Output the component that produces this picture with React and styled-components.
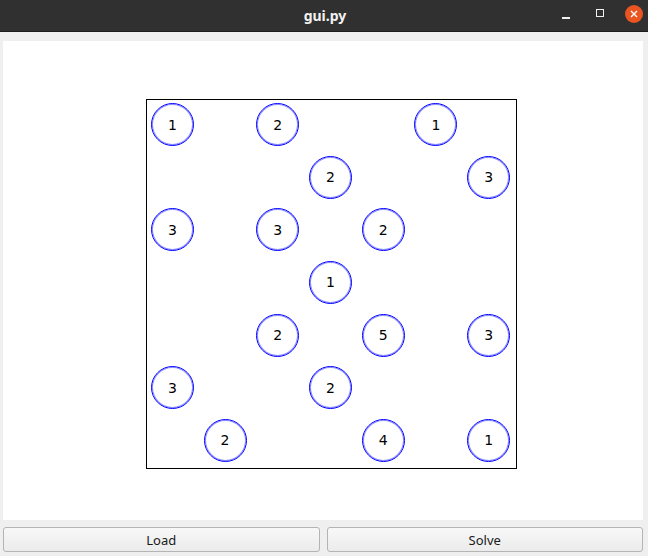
import React from 'react';
import styled, { createGlobalStyle } from 'styled-components';

const GlobalStyle = createGlobalStyle`
    html, body {
        margin: 0;
        padding: 0;
        background: #efefef;
    }
`;

const Window = styled.div`
    width: 648px;
    height: 556px;
    display: flex;
    flex-direction: column;
    background: #efefef;
    overflow: hidden;
`;

const TitleBar = styled.div`
    height: 31px;
    flex-shrink: 0;
    background: #303030;
    border-bottom: 1px solid #1c1c1c;
    display: flex;
    align-items: center;
    justify-content: center;
    position: relative;
`;

const Title = styled.div`
    font-family: "Noto Sans", "DejaVu Sans", sans-serif;
    font-weight: 700;
    font-size: 14px;
    color: #f2f2f2;
    margin-left: 2px;
`;

const Controls = styled.div`
    position: absolute;
    right: 5px;
    top: 0;
    height: 31px;
    display: flex;
    align-items: center;
`;

const Minimize = styled.div`
    width: 8px;
    height: 1.5px;
    background: #f0f0f0;
    margin-top: 5px;
    margin-right: 26px;
`;

const Maximize = styled.div`
    width: 6px;
    height: 6px;
    border: 1px solid #f0f0f0;
    margin-top: -5px;
    margin-right: 21px;
`;

const Close = styled.div`
    width: 18px;
    height: 18px;
    border-radius: 50%;
    background: #e95420;
    display: flex;
    align-items: center;
    justify-content: center;
    margin-top: -4px;
`;

const Content = styled.div`
    flex: 1;
    display: flex;
    flex-direction: column;
    padding: 9px 5px 5px 3px;
    gap: 7px;
`;

const Canvas = styled.div`
    height: 479px;
    background: #ffffff;
    padding: 58px 0 0 143px;
    box-sizing: border-box;
`;

const Board = styled.div`
    width: 369px;
    height: 368px;
    border: 1px solid #000000;
    display: grid;
    grid-template-columns: repeat(7, 1fr);
    grid-template-rows: repeat(7, 1fr);
`;

const Cell = styled.div`
    display: flex;
    align-items: center;
    justify-content: center;
`;

const Island = styled.div`
    width: 43px;
    height: 43px;
    margin: -3px 0 0 -2px;
    box-sizing: border-box;
    border: 1px solid #0000ff;
    box-shadow: inset 0 0 0 1px rgba(0, 0, 255, 0.45);
    border-radius: 50%;
    display: flex;
    align-items: center;
    justify-content: center;
    font-family: "DejaVu Sans", sans-serif;
    font-size: 14px;
    color: #000000;
`;

const ButtonRow = styled.div`
    display: flex;
    gap: 7px;
`;

const Button = styled.button`
    flex: 1;
    height: 25px;
    border: 1px solid #b4b4b4;
    border-radius: 3px;
    background: linear-gradient(#f8f8f8, #ebebeb);
    font-family: "Noto Sans", "DejaVu Sans", sans-serif;
    font-size: 13px;
    color: #1a1a1a;
    padding: 0;
    cursor: pointer;
`;

const puzzle = [
    [1, 0, 2, 0, 0, 1, 0],
    [0, 0, 0, 2, 0, 0, 3],
    [3, 0, 3, 0, 2, 0, 0],
    [0, 0, 0, 1, 0, 0, 0],
    [0, 0, 2, 0, 5, 0, 3],
    [3, 0, 0, 2, 0, 0, 0],
    [0, 2, 0, 0, 4, 0, 1],
];

function App() {
    return (
        <Window>
            <GlobalStyle />
            <TitleBar>
                <Title>gui.py</Title>
                <Controls>
                    <Minimize />
                    <Maximize />
                    <Close>
                        <svg width="8" height="8" viewBox="0 0 8 8">
                            <path d="M1 1 L7 7 M7 1 L1 7" stroke="#ffffff" strokeWidth="1.4" />
                        </svg>
                    </Close>
                </Controls>
            </TitleBar>
            <Content>
                <Canvas>
                    <Board>
                        {puzzle.flatMap((row, r) =>
                            row.map((n, c) => (
                                <Cell key={`${r}-${c}`}>
                                    {n > 0 && <Island>{n}</Island>}
                                </Cell>
                            ))
                        )}
                    </Board>
                </Canvas>
                <ButtonRow>
                    <Button>Load</Button>
                    <Button>Solve</Button>
                </ButtonRow>
            </Content>
        </Window>
    );
}

export default App;
